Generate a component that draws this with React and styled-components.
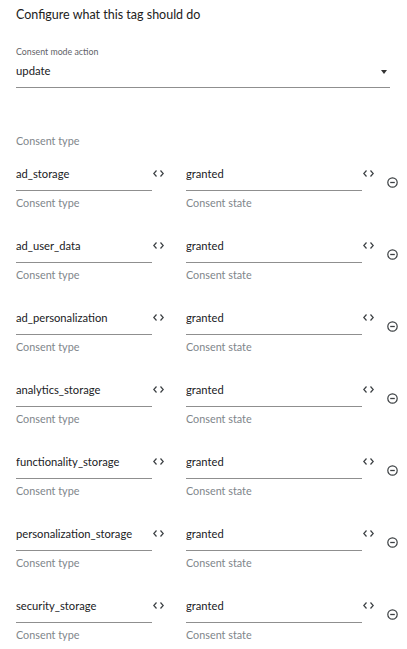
import React from 'react';
import styled, { createGlobalStyle } from 'styled-components';

const GlobalStyle = createGlobalStyle`
    html, body {
        margin: 0;
        padding: 0;
        background: #fff;
    }
    body {
        font-family: Lato, "Noto Sans", sans-serif;
        color: #202124;
    }
`;

const Page = styled.div`
    padding: 5px 17px 0 16px;
    width: 407px;
    box-sizing: border-box;
`;

const Title = styled.div`
    font-size: 12.5px;
    line-height: 20px;
    color: #212121;
`;

const SelectLabel = styled.div`
    margin-top: 21px;
    margin-bottom: 2px;
    font-size: 8.8px;
    line-height: 12px;
    color: #5f6368;
`;

const SelectBox = styled.div`
    display: flex;
    align-items: center;
    justify-content: space-between;
    padding: 3px 3px 8px 0;
    font-size: 11.3px;
    line-height: 16px;
    border-bottom: 1px solid #8f8f8f;
`;

const Caret = styled.span`
    width: 0;
    height: 0;
    border-left: 3.5px solid transparent;
    border-right: 3.5px solid transparent;
    border-top: 4px solid #333;
    margin-top: 2px;
`;

const SectionLabel = styled.div`
    margin-top: 45px;
    margin-bottom: 14px;
    font-size: 10.8px;
    line-height: 16px;
    color: #80868b;
`;

const Rows = styled.div`
    display: flex;
    flex-direction: column;
    gap: 24px;
`;

const Row = styled.div`
    display: flex;
    align-items: flex-start;
`;

const Field = styled.div`
    display: flex;
    flex-direction: column;
    flex-shrink: 0;
    width: ${p => p.$width}px;
`;

const InputBox = styled.div`
    padding: 3px 0 8px;
    font-size: 11.2px;
    line-height: 16px;
    color: #202124;
    border-bottom: 1px solid #8f8f8f;
    white-space: nowrap;
    overflow: hidden;
`;

const Helper = styled.div`
    margin-top: 4px;
    font-size: 10.8px;
    line-height: 16px;
    color: #80868b;
`;

const VarButton = styled.span`
    flex-shrink: 0;
    width: 12px;
    margin-top: 7px;
    margin-right: ${p => p.$gap}px;
    display: flex;
    justify-content: center;
`;

const RemoveButton = styled.span`
    flex-shrink: 0;
    margin-top: 14px;
    display: flex;
`;

const CodeIcon = () => (
    <svg width="11" height="7" viewBox="0 0 11 7">
        <path d="M3.5 0.5 L0.8 3.5 L3.5 6.5 M7.5 0.5 L10.2 3.5 L7.5 6.5" fill="none" stroke="#3c4043" strokeWidth="1.2"/>
    </svg>
);

const MinusCircle = () => (
    <svg width="11" height="11" viewBox="0 0 11 11">
        <circle cx="5.5" cy="5.5" r="4.7" fill="none" stroke="#3c4043" strokeWidth="1.2"/>
        <path d="M3.2 5.5 H7.8" stroke="#3c4043" strokeWidth="1.3"/>
    </svg>
);

const consentTypes = [
    'ad_storage',
    'ad_user_data',
    'ad_personalization',
    'analytics_storage',
    'functionality_storage',
    'personalization_storage',
    'security_storage'
];

export default function App() {
    return (
        <Page>
            <GlobalStyle />
            <Title>Configure what this tag should do</Title>
            <SelectLabel>Consent mode action</SelectLabel>
            <SelectBox>
                <span>update</span>
                <Caret />
            </SelectBox>
            <SectionLabel>Consent type</SectionLabel>
            <Rows>
                {consentTypes.map(type => (
                    <Row key={type}>
                        <Field $width={136}>
                            <InputBox>{type}</InputBox>
                            <Helper>Consent type</Helper>
                        </Field>
                        <VarButton $gap={22}><CodeIcon /></VarButton>
                        <Field $width={176}>
                            <InputBox>granted</InputBox>
                            <Helper>Consent state</Helper>
                        </Field>
                        <VarButton $gap={13}><CodeIcon /></VarButton>
                        <RemoveButton><MinusCircle /></RemoveButton>
                    </Row>
                ))}
            </Rows>
        </Page>
    );
}
